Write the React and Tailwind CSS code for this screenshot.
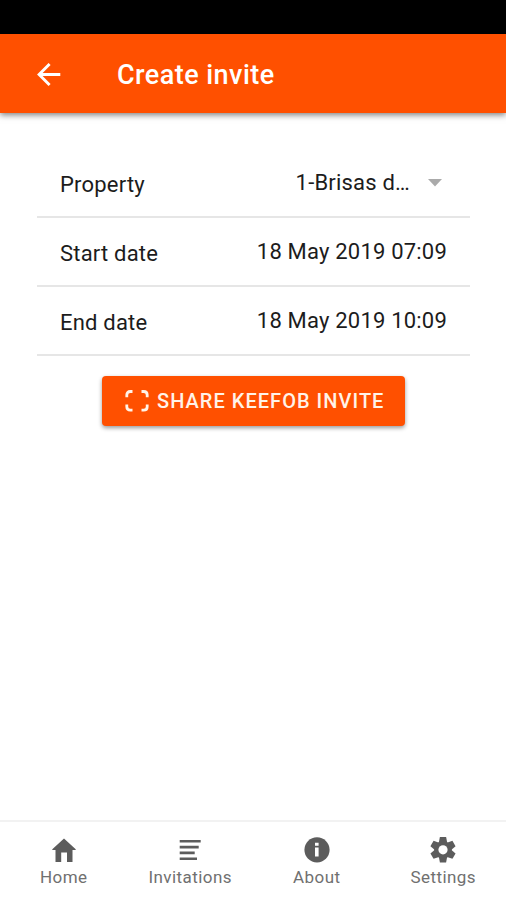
const rows = [
  { label: 'Property', value: '1-Brisas d…', select: true },
  { label: 'Start date', value: '18 May 2019 07:09' },
  { label: 'End date', value: '18 May 2019 10:09' },
];

const BackIcon = () => (
  <svg viewBox="0 0 24 24" width="24" height="24" fill="none" stroke="currentColor" strokeWidth="2.9">
    <path d="M23.3 11.5H2.5M12.6 1 2.1 11.5 12.6 22" />
  </svg>
);

const ScanIcon = () => (
  <svg viewBox="0 0 24 22" width="24" height="22" fill="none" stroke="currentColor" strokeWidth="2.8">
    <path d="M1.8 7.2V5q0-3.5 3.5-3.5h2.2M16.5 1.5h2.2q3.5 0 3.5 3.5v2.2M22.2 14.5v2.2q0 3.5-3.5 3.5h-2.2M7.5 20.2H5.3q-3.5 0-3.5-3.5v-2.2" />
  </svg>
);

const HomeIcon = () => (
  <svg viewBox="0 0 28 28" width="28" height="28" fill="currentColor">
    <path d="M14 2.5 25.7 13.2v.7h-3.2V26h-5.5v-9.5h-5.8V26H5.5V13.9H2.3v-.7z" />
  </svg>
);

const ListIcon = () => (
  <svg viewBox="0 0 28 28" width="28" height="28" fill="currentColor">
    <path d="M3.7 4h21v2.6h-21zM3.7 9.8h19v2.6h-19zM3.7 15.6h15v2.6h-15zM3.7 21.5h17.3v2.6H3.7z" />
  </svg>
);

const InfoIcon = () => (
  <svg viewBox="0 0 28 28" width="28" height="28">
    <circle cx="14" cy="13.8" r="12.6" fill="currentColor" />
    <path fill="#fff" d="M12 6.8h3.6v3H12zM12 11.5h3.6v8.9H12z" />
  </svg>
);

const GearIcon = () => (
  <svg viewBox="0 0 28 28" width="28" height="28">
    <g fill="currentColor" transform="translate(14 13.8)">
      <circle r="8.8" />
      {[0, 60, 120, 180, 240, 300].map((angle) => (
        <path key={angle} d="M-4.2-7-3.1-12.7h6.2L4.2-7z" transform={`rotate(${angle})`} />
      ))}
      <circle r="4.6" fill="#fff" />
    </g>
  </svg>
);

const tabs = [
  { label: 'Home', icon: <HomeIcon /> },
  { label: 'Invitations', icon: <ListIcon /> },
  { label: 'About', icon: <InfoIcon /> },
  { label: 'Settings', icon: <GearIcon /> },
];

const App = () => {
  return (
    <div className="flex h-[900px] w-[506px] flex-col overflow-hidden bg-white font-[Roboto,sans-serif] text-[#1c1c1c]">
      {/* Status bar */}
      <div className="h-[34px] shrink-0 bg-black" />

      {/* Header */}
      <header className="flex h-[79px] shrink-0 items-center bg-[#ff5000] pl-[37px] pt-[3px] text-white shadow-[0_2px_6px_rgba(0,0,0,0.5)]">
        <BackIcon />
        <h1 className="ml-14 text-[27px] font-medium tracking-[0.45px]">Create invite</h1>
      </header>

      {/* Form */}
      <main className="flex flex-1 flex-col pl-[37px] pr-9 pt-9">
        {rows.map((row) => (
          <div key={row.label} className="flex h-[69px] items-center justify-between border-b-2 border-[#e6e6e6] pl-[23px] pr-[23px] text-[22px]">
            <span className="pt-[3px] tracking-[0.2px]">{row.label}</span>
            <span className="flex items-center tracking-[0.2px]">
              {row.value}
              {row.select && (
                <svg viewBox="0 0 14 8" width="14" height="8" className="ml-[18px] mr-[5px] text-[#aaaaaa]">
                  <path d="M0 0h14L7 7.5z" fill="currentColor" />
                </svg>
              )}
            </span>
          </div>
        ))}
        <button className="ml-[65px] mt-5 flex h-[50px] w-[303px] items-center gap-2 whitespace-nowrap rounded bg-[#ff5000] pl-[23px] text-[20px] font-medium tracking-[1.03px] text-[#fff3e8] shadow-[0_2px_4px_rgba(0,0,0,0.4)]">
          <ScanIcon />
          SHARE KEEFOB INVITE
        </button>
      </main>

      {/* Tabs */}
      <nav className="flex h-[80px] shrink-0 border-t-2 border-[#f2f2f2] text-[#5c5c5c]">
        {tabs.map((tab) => (
          <div key={tab.label} className="flex flex-1 flex-col items-center pl-px pt-3">
            <div className="flex h-[31px] items-center">{tab.icon}</div>
            <span className="text-[17px] leading-6 tracking-[0.45px] text-[#707070]">{tab.label}</span>
          </div>
        ))}
      </nav>
    </div>
  );
};

export default App;
